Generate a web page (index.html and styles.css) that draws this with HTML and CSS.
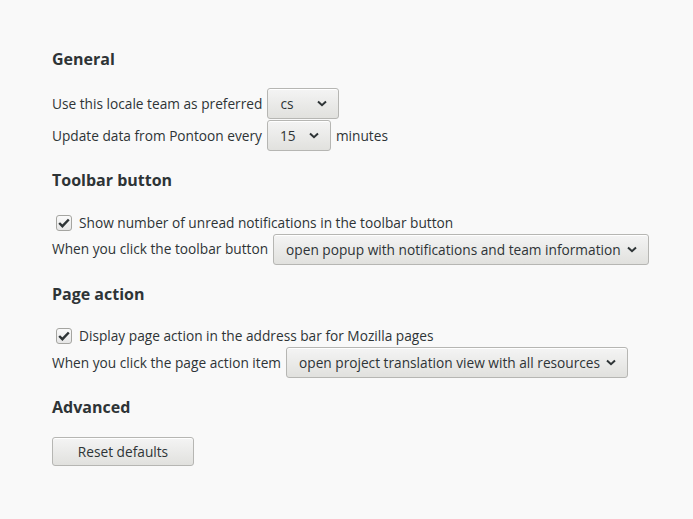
FILE: index.html
```html
<!DOCTYPE html>
<html>
<head>
<meta charset="utf-8">
<link rel="stylesheet" href="styles.css">
</head>
<body>
<main class="page">
  <section class="section">
    <h2 class="heading">General</h2>
    <div class="row">
      <span class="label">Use this locale team as preferred</span>
      <span class="select select-cs"><span class="value">cs</span><svg class="chev" width="10" height="7" viewBox="0 0 10 7"><path d="M1 1.5 L5 5.2 L9 1.5" fill="none" stroke="#2e3436" stroke-width="2"/></svg></span>
    </div>
    <div class="row">
      <span class="label">Update data from Pontoon every</span>
      <span class="select select-num"><span class="value">15</span><svg class="chev" width="10" height="7" viewBox="0 0 10 7"><path d="M1 1.5 L5 5.2 L9 1.5" fill="none" stroke="#2e3436" stroke-width="2"/></svg></span>
      <span class="label">minutes</span>
    </div>
  </section>
  <section class="section">
    <h2 class="heading">Toolbar button</h2>
    <label class="check-row">
      <span class="checkbox"><svg width="12" height="10" viewBox="0 0 12 10"><path d="M1.2 5 L4.4 8.2 L10.8 1.5" fill="none" stroke="#2e3436" stroke-width="2.4"/></svg></span>
      <span class="label">Show number of unread notifications in the toolbar button</span>
    </label>
    <div class="row">
      <span class="label">When you click the toolbar button</span>
      <span class="select"><span class="value">open popup with notifications and team information</span><svg class="chev" width="10" height="7" viewBox="0 0 10 7"><path d="M1 1.5 L5 5.2 L9 1.5" fill="none" stroke="#2e3436" stroke-width="2"/></svg></span>
    </div>
  </section>
  <section class="section">
    <h2 class="heading">Page action</h2>
    <label class="check-row">
      <span class="checkbox"><svg width="12" height="10" viewBox="0 0 12 10"><path d="M1.2 5 L4.4 8.2 L10.8 1.5" fill="none" stroke="#2e3436" stroke-width="2.4"/></svg></span>
      <span class="label">Display page action in the address bar for Mozilla pages</span>
    </label>
    <div class="row">
      <span class="label">When you click the page action item</span>
      <span class="select"><span class="value">open project translation view with all resources</span><svg class="chev" width="10" height="7" viewBox="0 0 10 7"><path d="M1 1.5 L5 5.2 L9 1.5" fill="none" stroke="#2e3436" stroke-width="2"/></svg></span>
    </div>
  </section>
  <section class="section">
    <h2 class="heading">Advanced</h2>
    <div class="row">
      <button class="button" type="button">Reset defaults</button>
    </div>
  </section>
</main>
</body>
</html>
```
FILE: styles.css
```css
html, body {
  margin: 0;
  padding: 0;
  background: #f9f9f9;
}
body {
  font-family: "Open Sans", "DejaVu Sans", sans-serif;
  font-size: 13.7px;
  color: #2e3436;
}
.page {
  padding: 48px 52px 0 52px;
  display: flex;
  flex-direction: column;
  gap: 18px;
}
.section {
  display: flex;
  flex-direction: column;
  align-items: flex-start;
}
.heading {
  margin: 0 0 18px 0;
  font-size: 16px;
  line-height: 22px;
  font-weight: bold;
}
.row {
  display: flex;
  align-items: center;
  height: 31px;
  white-space: nowrap;
}
.row + .row {
  margin-top: 1px;
}
.check-row {
  display: flex;
  align-items: center;
  height: 22px;
  margin-top: 2.5px;
  white-space: nowrap;
}
.checkbox {
  box-sizing: border-box;
  width: 16px;
  height: 16px;
  margin: 0 7px 0 4px;
  border: 1px solid #a5a5a1;
  border-radius: 3px;
  background: linear-gradient(#fafafa, #e6e6e6);
  display: flex;
  align-items: center;
  justify-content: center;
}
.label {
  line-height: 20px;
}
.select {
  box-sizing: border-box;
  height: 31px;
  margin: 0 5px;
  padding: 0 11px 0 12px;
  display: flex;
  align-items: center;
  justify-content: space-between;
  gap: 6px;
  border: 1px solid #b6b6b3;
  border-radius: 3px;
  background: linear-gradient(#f4f4f4, #e1e1de);
  box-shadow: inset 0 1px #ffffff;
}
.select-cs { width: 72px; }
.select-num { width: 64px; }
.chev { flex: none; }
.button {
  box-sizing: border-box;
  width: 142px;
  height: 29px;
  font: inherit;
  color: #2e3436;
  border: 1px solid #b6b6b3;
  border-radius: 3px;
  background: linear-gradient(#f4f4f4, #e1e1de);
  box-shadow: inset 0 1px #ffffff;
}
```
